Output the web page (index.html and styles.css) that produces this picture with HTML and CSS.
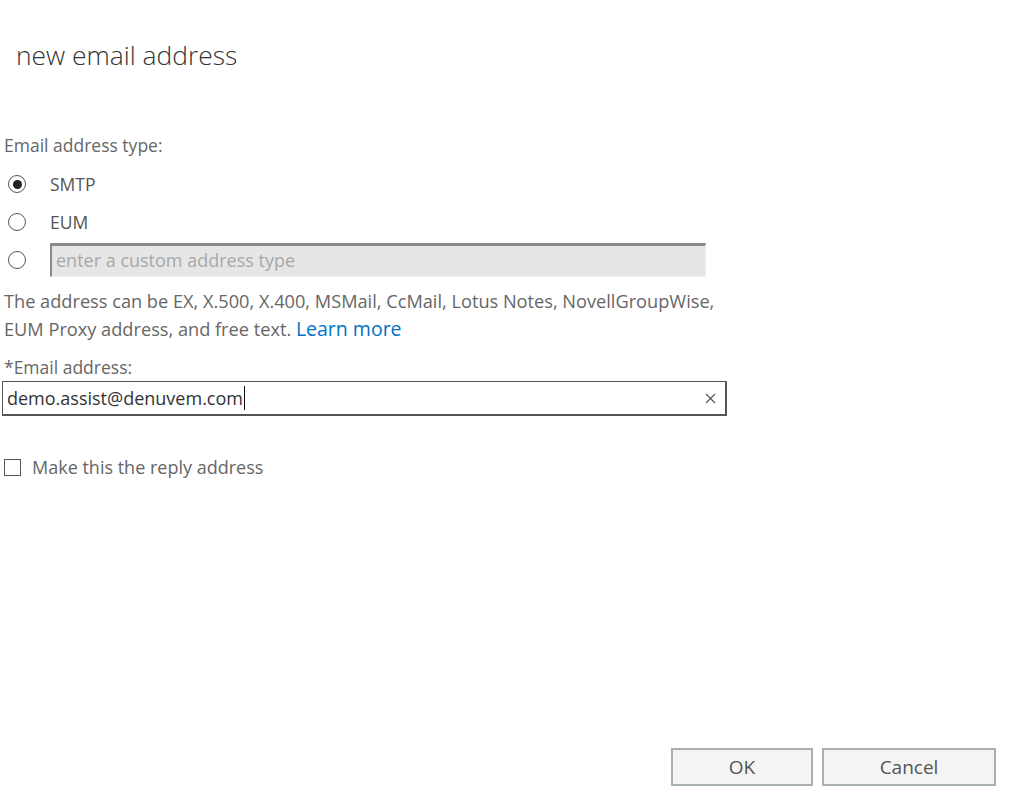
FILE: index.html
```html
<!DOCTYPE html>
<html>
<head>
<meta charset="utf-8">
<link rel="stylesheet" href="styles.css">
</head>
<body>
<div class="page">
  <h1 class="title">new email address</h1>
  <div class="label type-label">Email address type:</div>
  <div class="radios">
    <div class="radio-row">
      <span class="radio checked"></span>
      <span class="radio-text">SMTP</span>
    </div>
    <div class="radio-row">
      <span class="radio"></span>
      <span class="radio-text">EUM</span>
    </div>
    <div class="radio-row">
      <span class="radio"></span>
      <div class="custom-input">enter a custom address type</div>
    </div>
  </div>
  <p class="help">The address can be EX, X.500, X.400, MSMail, CcMail, Lotus Notes, NovellGroupWise,<br>EUM Proxy address, and free text. <a class="link">Learn more</a></p>
  <div class="label email-label">*Email address:</div>
  <div class="email-input">
    <span class="email-value">demo.assist@denuvem.com</span><span class="caret"></span>
    <svg class="clear" width="11" height="11" viewBox="0 0 11 11"><path d="M1 1L10 10M10 1L1 10" stroke="#555" stroke-width="1.2" fill="none"/></svg>
  </div>
  <div class="check-row">
    <span class="checkbox"></span>
    <span class="check-text">Make this the reply address</span>
  </div>
  <div class="footer">
    <div class="btn ok">OK</div>
    <div class="btn cancel">Cancel</div>
  </div>
</div>
</body>
</html>
```
FILE: styles.css
```css
html, body {
  margin: 0;
  padding: 0;
  background: #fff;
}
body {
  font-family: "Open Sans", "Noto Sans", sans-serif;
  color: #555;
}
.page {
  height: 804px;
  display: flex;
  flex-direction: column;
  box-sizing: border-box;
}
.title {
  margin: 39px 0 0 16px;
  font-size: 26.4px;
  line-height: 32px;
  font-weight: 300;
  color: #333;
}
.label {
  font-size: 17.5px;
  line-height: 22px;
  padding-left: 4px;
  color: #666;
  white-space: nowrap;
}
.type-label {
  margin-top: 63px;
}
.radios {
  margin-top: 9px;
}
.radio-row {
  height: 38px;
  display: flex;
  align-items: center;
}
.radio {
  width: 16px;
  height: 16px;
  border: 1.6px solid #555;
  border-radius: 50%;
  margin-left: 8px;
  display: flex;
  align-items: center;
  justify-content: center;
  box-sizing: content-box;
  flex: none;
}
.radio.checked::after {
  content: "";
  width: 9px;
  height: 9px;
  border-radius: 50%;
  background: #222;
}
.radio-text {
  margin-left: 24px;
  font-size: 17.5px;
  color: #555;
}
.custom-input {
  margin-left: 24px;
  width: 656px;
  height: 34px;
  box-sizing: border-box;
  background: #e6e6e6;
  border-top: 3px solid #8a8a8a;
  border-left: 2px solid #8a8a8a;
  border-right: 1px solid #f0f0f0;
  border-bottom: 1px solid #f0f0f0;
  color: #a8a8a8;
  font-size: 18px;
  line-height: 28px;
  padding-left: 4px;
  white-space: nowrap;
}
.help {
  margin: 9px 0 0 0;
  padding-left: 4px;
  font-size: 18.2px;
  line-height: 27px;
  color: #666;
  white-space: nowrap;
}
.link {
  color: #0072c6;
  font-size: 19.5px;
}
.email-label {
  margin-top: 13px;
}
.email-input {
  margin: 3px 0 0 2px;
  width: 725px;
  height: 35px;
  box-sizing: border-box;
  border: 1px solid #555;
  border-right-width: 2px;
  border-bottom-width: 2px;
  display: flex;
  align-items: center;
  padding-left: 4px;
  color: #333;
  font-size: 18px;
}
.caret {
  width: 1.5px;
  height: 24px;
  background: #111;
  margin-left: 1px;
}
.clear {
  margin-left: auto;
  margin-right: 9px;
  flex: none;
}
.check-row {
  margin-top: 41px;
  display: flex;
  align-items: center;
  height: 20px;
}
.checkbox {
  width: 15px;
  height: 15px;
  border: 1.5px solid #555;
  margin-left: 4px;
  flex: none;
}
.check-text {
  margin-left: 11px;
  font-size: 18px;
  color: #666;
}
.footer {
  margin-top: auto;
  margin-bottom: 18px;
  display: flex;
  justify-content: flex-end;
  gap: 9px;
  padding-right: 28px;
}
.btn {
  height: 38px;
  box-sizing: border-box;
  border: 2px solid #a9b0b3;
  background: #f4f4f4;
  color: #555;
  font-size: 19px;
  display: flex;
  align-items: center;
  justify-content: center;
}
.ok { width: 142px; }
.cancel { width: 174px; }
```
